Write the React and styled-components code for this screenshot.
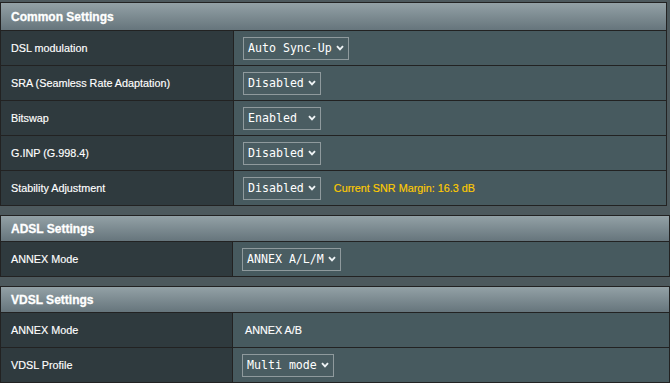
import React from "react";
import styled, { createGlobalStyle } from "styled-components";

const GlobalStyle = createGlobalStyle`
  html, body { margin: 0; padding: 0; background: #4d595d; }
  body { width: 670px; height: 383px; overflow: hidden; }
  * { box-sizing: border-box; }
`;

const Page = styled.div`
  display: flex;
  flex-direction: column;
  gap: 9px;
  padding-top: 2px;
`;

const Table = styled.section`
  width: ${(p) => p.$w}px;
  border: 1px solid #222;
`;

const Header = styled.div`
  height: ${(p) => p.$h}px;
  display: flex;
  align-items: center;
  padding-left: 10px;
  padding-top: 1px;
  background: linear-gradient(to bottom, #93a1a6 0%, #66757c 100%);
  border-bottom: 1px solid #222;
  color: #fff;
  font-family: "Liberation Sans", Arial, sans-serif;
  font-weight: bold;
  font-size: 12px;
  -webkit-text-stroke: 0.3px #fff;
`;

const Row = styled.div`
  display: grid;
  grid-template-columns: ${(p) => p.$label}px 1fr;
  height: 34px;
  & + & { height: 35px; border-top: 1px solid #222; }
`;

const Label = styled.div`
  display: flex;
  align-items: center;
  padding-left: 10px;
  padding-bottom: 1px;
  background: #2f3a3e;
  border-right: 1px solid #222;
  color: #fff;
  font-family: "Liberation Sans", Arial, sans-serif;
  font-size: 10.8px;
  -webkit-text-stroke: 0.15px #fff;
`;

const Value = styled.div`
  display: flex;
  align-items: center;
  padding-left: 9px;
  background: #475a5f;
  color: #fff;
  font-family: "Liberation Sans", Arial, sans-serif;
  font-size: 10.8px;
`;

const PlainText = styled.span`
  padding-left: 3px;
  padding-bottom: 1px;
  -webkit-text-stroke: 0.15px #fff;
`;

const SelectBox = styled.div`
  display: inline-flex;
  align-items: center;
  gap: 4px;
  height: 23px;
  padding: 0 4px;
  border: 1px solid #8f9a9d;
  background: #4a5d62;
  color: #fff;
  font-family: "DejaVu Sans Mono", "Liberation Mono", monospace;
  font-size: 11.6px;
  white-space: pre;
`;

const Note = styled.span`
  margin-left: 13px;
  padding-bottom: 1px;
  color: #ffcc00;
  font-family: "Liberation Sans", Arial, sans-serif;
  font-size: 10.8px;
  -webkit-text-stroke: 0.15px #ffcc00;
`;

const Chevron = () => (
  <svg width="8" height="6" viewBox="0 0 8 6" aria-hidden="true">
    <path d="M1 1.2 L4 4.4 L7 1.2" fill="none" stroke="#eef3f5" strokeWidth="1.9" />
  </svg>
);

const Select = ({ value }) => (
  <SelectBox>
    <span>{value}</span>
    <Chevron />
  </SelectBox>
);

const sections = [
  {
    title: "Common Settings",
    width: 667,
    header: 28,
    label: 233,
    rows: [
      { label: "DSL modulation", select: "Auto Sync-Up" },
      { label: "SRA (Seamless Rate Adaptation)", select: "Disabled" },
      { label: "Bitswap", select: "Enabled " },
      { label: "G.INP (G.998.4)", select: "Disabled" },
      { label: "Stability Adjustment", select: "Disabled", note: "Current SNR Margin: 16.3 dB" },
    ],
  },
  {
    title: "ADSL Settings",
    width: 670,
    header: 26,
    label: 232,
    rows: [{ label: "ANNEX Mode", select: "ANNEX A/L/M" }],
  },
  {
    title: "VDSL Settings",
    width: 670,
    header: 26,
    label: 232,
    rows: [
      { label: "ANNEX Mode", text: "ANNEX A/B" },
      { label: "VDSL Profile", select: "Multi mode" },
    ],
  },
];

export default function App() {
  return (
    <>
      <GlobalStyle />
      <Page>
        {sections.map((s) => (
          <Table key={s.title} $w={s.width}>
            <Header $h={s.header}>{s.title}</Header>
            {s.rows.map((r) => (
              <Row key={r.label} $label={s.label}>
                <Label>{r.label}</Label>
                <Value>
                  {r.select ? <Select value={r.select} /> : <PlainText>{r.text}</PlainText>}
                  {r.note && <Note>{r.note}</Note>}
                </Value>
              </Row>
            ))}
          </Table>
        ))}
      </Page>
    </>
  );
}
